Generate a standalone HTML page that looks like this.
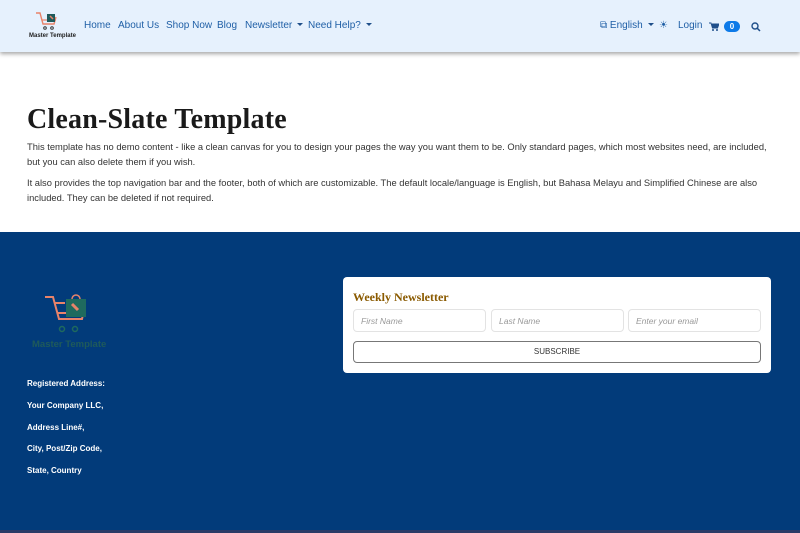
<!DOCTYPE html>
<html><head><meta charset="utf-8"><style>
*{margin:0;padding:0;box-sizing:border-box}
body{width:800px;height:533px;overflow:hidden;font-family:"Liberation Sans",sans-serif;background:#fff;position:relative}
.nav{position:absolute;left:0;top:0;width:800px;height:52px;background:#e6f1fd;box-shadow:0 2px 4px rgba(0,0,0,.35);z-index:2}
.nav a{position:absolute;top:20px;font-size:10px;color:#1f5fa6;white-space:nowrap}
.caret{display:inline-block;border-left:3px solid transparent;border-right:3px solid transparent;border-top:3px solid #1f4f8a;margin-left:5px;vertical-align:2px}
h1{position:absolute;left:27px;top:104px;font-family:"Liberation Serif",serif;font-size:28px;font-weight:bold;color:#1a1a1a;letter-spacing:.2px}
.p{position:absolute;left:27px;font-size:9.35px;color:#333;line-height:15px;white-space:nowrap}
.foot{position:absolute;left:0;top:232px;width:800px;height:298px;background:#023b7a}
.strip{position:absolute;left:0;top:530px;width:800px;height:3px;background:#2a3a66}
.addr{position:absolute;left:27px;font-size:8px;color:#fff;font-weight:bold}
.card{position:absolute;left:343px;top:277px;width:428px;height:96px;background:#fff;border-radius:4px}
.card h3{position:absolute;left:10px;top:13px;font-family:"Liberation Serif",serif;font-size:12px;color:#8a5a00;font-weight:bold}
.in{position:absolute;top:32px;width:133px;height:23px;border:1px solid #e3e3e3;border-radius:4px;font-size:8.5px;font-style:italic;color:#999;padding:6px 7px}
.btn{position:absolute;left:10px;top:64px;width:408px;height:22px;border:1px solid #777;border-radius:4px;font-size:8px;color:#333;text-align:center;line-height:20px}
</style></head><body>
<div class="nav">
<svg style="position:absolute;left:34px;top:11px" width="26" height="24" viewBox="0 0 26 24"><path d="M2 2h4l3 11h11l2-7" fill="none" stroke="#e8836a" stroke-width="1.4"/><path d="M8 9h14" stroke="#e8836a" stroke-width="1.2"/><rect x="13" y="3" width="8" height="8" fill="#1f5a5a"/><path d="M16 5l3 3" stroke="#e8836a" stroke-width="1.5"/><circle cx="11" cy="17" r="1.3" fill="none" stroke="#333"/><circle cx="18" cy="17" r="1.3" fill="none" stroke="#333"/></svg>
<div style="position:absolute;left:29px;top:33px;font-size:6px;font-weight:bold;color:#222">Master Template</div>
<a style="left:84px">Home</a><a style="left:118px">About Us</a><a style="left:166px">Shop Now</a><a style="left:217px">Blog</a><a style="left:245px">Newsletter<span class="caret"></span></a><a style="left:308px">Need Help?<span class="caret"></span></a>
<a style="left:600px">&#x29C9; English<span class="caret"></span></a>
<a style="left:659px">&#x2600;</a>
<a style="left:678px">Login</a>
<svg style="position:absolute;left:709px;top:22px" width="10" height="9" viewBox="0 0 10 9"><path d="M0 1h2l1.5 5h5L10 2H3" fill="#1f4f8a" stroke="#1f4f8a" stroke-width="1"/><circle cx="4" cy="8" r="1" fill="#1f4f8a"/><circle cx="8" cy="8" r="1" fill="#1f4f8a"/></svg>
<div style="position:absolute;left:724px;top:21px;width:16px;height:11px;border-radius:6px;background:#0d7ae8;color:#fff;font-size:8px;text-align:center;line-height:11px;font-weight:bold">0</div>
<svg style="position:absolute;left:751px;top:22px" width="10" height="10" viewBox="0 0 10 10"><circle cx="4" cy="4" r="3" fill="none" stroke="#1f4f8a" stroke-width="1.4"/><path d="M6.3 6.3L9 9" stroke="#1f4f8a" stroke-width="1.5"/></svg>
</div>
<h1>Clean-Slate Template</h1>
<div class="p" style="top:140px">This template has no demo content - like a clean canvas for you to design your pages the way you want them to be. Only standard pages, which most websites need, are included,<br>but you can also delete them if you wish.</div>
<div class="p" style="top:176px">It also provides the top navigation bar and the footer, both of which are customizable. The default locale/language is English, but Bahasa Melayu and Simplified Chinese are also<br>included. They can be deleted if not required.</div>
<div class="foot"></div><div class="strip"></div>
<svg style="position:absolute;left:44px;top:291px" width="48" height="44" viewBox="0 0 48 44"><path d="M1 6h8l6 22h23l3-14" fill="none" stroke="#e8836a" stroke-width="2"/><path d="M11 12h10M14 22h26" stroke="#e8836a" stroke-width="2"/><rect x="22" y="8" width="20" height="18" fill="#1f6a5e"/><path d="M28 8a4 4 0 0 1 8 0" fill="none" stroke="#e8836a" stroke-width="1.5"/><path d="M28 13l6 6" stroke="#e8836a" stroke-width="3"/><circle cx="18" cy="38" r="2.5" fill="none" stroke="#1f6a5e" stroke-width="1.5"/><circle cx="31" cy="38" r="2.5" fill="none" stroke="#1f6a5e" stroke-width="1.5"/></svg>
<div style="position:absolute;left:32px;top:339px;font-size:9.5px;font-weight:bold;color:#1f5a5a">Master Template</div>
<div class="addr" style="top:379px">Registered Address:</div>
<div class="addr" style="top:401px">Your Company LLC,</div>
<div class="addr" style="top:423px">Address Line#,</div>
<div class="addr" style="top:444px">City, Post/Zip Code,</div>
<div class="addr" style="top:466px">State, Country</div>
<div class="card"><h3>Weekly Newsletter</h3>
<div class="in" style="left:10px">First Name</div><div class="in" style="left:148px">Last Name</div><div class="in" style="left:285px">Enter your email</div>
<div class="btn">SUBSCRIBE</div></div>
</body></html>
